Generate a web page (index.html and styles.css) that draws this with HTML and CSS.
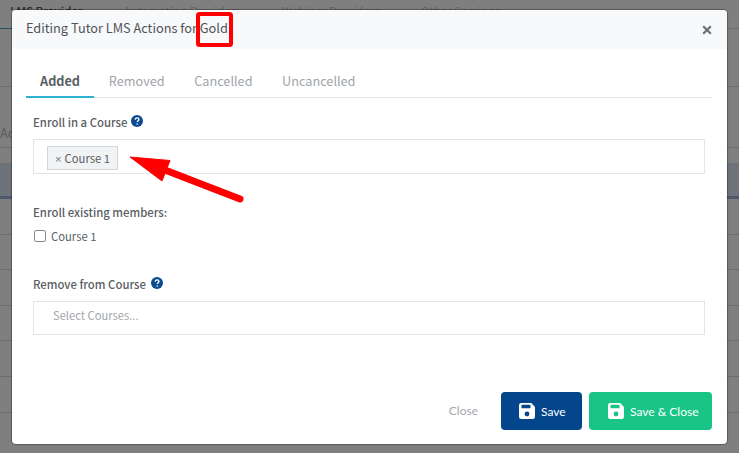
FILE: index.html
```html
<!DOCTYPE html>
<html lang="en">
<head>
<meta charset="utf-8">
<title>Editing Tutor LMS Actions for Gold</title>
<link rel="stylesheet" href="styles.css">
</head>
<body>
<div class="page">
  <nav class="page-nav">
    <span class="page-tab page-tab-first">LMS Provider</span>
    <span class="page-tab">Automation Providers</span>
    <span class="page-tab">Webinar Providers</span>
    <span class="page-tab">Other Sessions</span>
  </nav>
  <div class="page-rows">
    <div class="page-row page-row-a"></div>
    <div class="page-row page-row-b"><div class="page-row-text">Act</div></div>
    <div class="page-row-gap"></div>
    <div class="page-row-head"></div>
    <div class="page-row"></div>
    <div class="page-row"></div>
    <div class="page-row"></div>
    <div class="page-row"></div>
    <div class="page-row"></div>
    <div class="page-row"></div>
  </div>
</div>
<div class="overlay"></div>
<section class="modal">
  <header class="modal-head">
    <h1 class="modal-title">Editing Tutor LMS Actions for Gold</h1>
    <svg class="modal-x" viewBox="0 0 10 10" aria-label="Close"><path d="M1.2 1.2l7.6 7.6M8.8 1.2L1.2 8.8"/></svg>
  </header>
  <div class="modal-body">
    <div class="tabs">
      <span class="tab tab-active">Added</span>
      <span class="tab">Removed</span>
      <span class="tab">Cancelled</span>
      <span class="tab">Uncancelled</span>
    </div>
    <div class="form">
      <div class="label-row label-row-first">
        <label class="label">Enroll in a Course</label>
        <svg class="help" viewBox="0 0 12 12"><circle cx="6" cy="6" r="6"/><path d="M4.2 4.6c.1-1.1.9-1.7 1.9-1.7 1.1 0 1.8.7 1.8 1.5 0 1.3-1.6 1.3-1.6 2.6" /><circle class="dot" cx="6.2" cy="9" r=".8"/></svg>
      </div>
      <div class="select select-tags">
        <span class="tag"><span class="tag-x">×</span>Course 1</span>
      </div>
      <div class="label existing">Enroll existing members:</div>
      <label class="check-row"><span class="check"></span>Course 1</label>
      <div class="label-row label-row-remove">
        <label class="label">Remove from Course</label>
        <svg class="help" viewBox="0 0 12 12"><circle cx="6" cy="6" r="6"/><path d="M4.2 4.6c.1-1.1.9-1.7 1.9-1.7 1.1 0 1.8.7 1.8 1.5 0 1.3-1.6 1.3-1.6 2.6" /><circle class="dot" cx="6.2" cy="9" r=".8"/></svg>
      </div>
      <div class="select select-empty">Select Courses...</div>
    </div>
  </div>
  <footer class="modal-foot">
    <span class="close-link">Close</span>
    <button class="btn btn-save">
      <svg class="disk" viewBox="0 0 16 16"><path fill-rule="evenodd" d="M2.2 0h10l3.2 3.2a2 2 0 0 1 .6 1.4v9.2a2.2 2.2 0 0 1-2.2 2.2H2.2A2.2 2.2 0 0 1 0 13.800V2.200A2.200 2.200 0 0 1 2.200 0zM3 1.800a.5.5 0 0 0-.5.5v2.400a.5.500 0 0 0 .5.5h8a.5.500 0 0 0 .5-.5V2.300a.5.500 0 0 0-.5-.5zM8 8.600a2.400 2.400 0 1 0 0 4.800 2.400 2.400 0 0 0 0-4.800z"/></svg>Save
    </button>
    <button class="btn btn-close">
      <svg class="disk" viewBox="0 0 16 16"><path fill-rule="evenodd" d="M2.2 0h10l3.2 3.2a2 2 0 0 1 .6 1.4v9.2a2.2 2.2 0 0 1-2.2 2.2H2.2A2.2 2.2 0 0 1 0 13.800V2.200A2.200 2.200 0 0 1 2.200 0zM3 1.800a.5.5 0 0 0-.5.5v2.400a.5.500 0 0 0 .5.5h8a.5.500 0 0 0 .5-.5V2.300a.5.500 0 0 0-.5-.5zM8 8.600a2.400 2.400 0 1 0 0 4.800 2.400 2.400 0 0 0 0-4.800z"/></svg>Save &amp; Close
    </button>
  </footer>
</section>
<svg class="annotations" viewBox="0 0 739 453">
  <rect class="mark" x="198" y="14" width="33" height="31" rx="1.500"/>
  <path class="arrow-shaft" d="M165 170L240 199"/>
  <path class="arrow-head" d="M130 157L170 160.500L162 181Z"/>
</svg>
</body>
</html>
```
FILE: styles.css
```css
* { box-sizing: border-box; }
html, body { margin: 0; height: 100%; }
body {
  width: 739px;
  height: 453px;
  overflow: hidden;
  position: relative;
  background: #808080;
  font-family: "Noto Sans CJK SC", "Noto Sans", sans-serif;
  color: #4b4f56;
}
.page { height: 100%; display: flex; flex-direction: column; background: #fff; }
.page-nav { flex: none; display: flex; gap: 41px; padding: 1px 0 0 10px; height: 29px; font-size: 11.500px; font-weight: 400; color: #ccc; white-space: nowrap; border-bottom: 1px solid #d8d8d8; position: relative; }
.page-nav::before { content: ""; position: absolute; left: 0; bottom: -1px; width: 12px; height: 1px; background: #3fa7bd; }
.page-tab { height: 9px; line-height: 20px; overflow: hidden; }
.page-tab-first { color: #555; font-weight: 500; }
.page-rows { flex: 1; display: flex; flex-direction: column; }
.page-row { flex: none; border-bottom: 1px solid #d8d8d8; height: 35.600px; }
.page-row-a { height: 58px; }
.page-row-b { height: 61px; padding-top: 37px; }
.page-row-text { width: 12px; overflow: hidden; font-size: 12.700px; line-height: 18px; color: #b8b8b8; white-space: nowrap; }
.page-row-gap { flex: none; height: 15px; }
.page-row-head { flex: none; height: 36px; background: #dde6f5; border-bottom: 3px solid #98b2d8; }
.overlay { position: absolute; inset: 0; background: rgba(0, 0, 0, .5); }
.modal {
  position: absolute;
  left: 12px;
  top: 10px;
  width: 715px;
  height: 434px;
  background: #fff;
  border-radius: 4px;
  display: flex;
  flex-direction: column;
  box-shadow: 0 0 1px 1px rgba(0, 0, 0, .3);
}
.modal-head {
  height: 39px;
  flex: none;
  background: #f8f9fa;
  border-radius: 4px 4px 0 0;
  display: flex;
  align-items: center;
  justify-content: space-between;
  padding: 0 15px 4px 14px;
}
.modal-title { margin: 0; font-size: 12.750px; font-weight: 400; color: #4f5359; line-height: 20px; }
.modal-x { width: 10px; height: 10px; fill: none; stroke: #6c7178; stroke-width: 2.200; margin-top: 5px; }
.modal-body { flex: 1; padding: 0 15px 0 14px; }
.tabs { display: flex; height: 49px; align-items: flex-end; border-bottom: 1px solid #e3e6e8; }
.tab { padding: 0 14.800px 6px; font-size: 12.700px; line-height: 20px; color: #a0a4a9; font-weight: 400; }
.tab-active { color: #5a5f66; font-weight: 700; padding: 0 14px 5px; border-bottom: 2px solid #2eb0d0; margin-bottom: -1px; }
.form { padding: 0 7px; }
.label-row { display: flex; align-items: center; gap: 4px; }
.label-row-first { margin-top: 15px; }
.label-row-remove { margin-top: 31px; gap: 5px; }
.label { font-size: 11.350px; line-height: 18px; font-weight: 500; color: #5a5e64; }
.help { width: 12px; height: 12px; margin-top: -2px; }
.help circle { fill: #0b4a8f; }
.help path { fill: none; stroke: #fff; stroke-width: 1.400; }
.help .dot { fill: #fff; }
.select { border: 1px solid #e3e6e8; margin-top: 8px; }
.select-tags { height: 35px; padding: 4px 13px; }
.tag { display: inline-block; height: 24px; line-height: 22px; padding: 0 7px; font-size: 11.250px; color: #5a5e64; background: #f1f3f4; border: 1px solid #d3d6d9; }
.tag-x { font-family: "Liberation Sans", sans-serif; color: #777; margin-right: 3px; }
.existing { margin-top: 29px; }
.check-row { display: flex; align-items: center; gap: 5px; font-size: 11.250px; color: #5a5e64; margin-top: 7px; line-height: 16px; padding-left: 1px; }
.check { width: 12px; height: 12px; border: 1px solid #8a8d91; border-radius: 2px; background: #fff; }
.select-empty { height: 34px; line-height: 27px; padding-left: 19px; font-size: 11.200px; color: #a3a6aa; }
.modal-foot { flex: none; height: 52px; padding: 0 15px 14px 0; display: flex; align-items: stretch; justify-content: flex-end; }
.close-link { font-family: Lato, sans-serif; font-size: 12px; color: #a5a8ac; align-self: center; margin-right: 23px; margin-bottom: 1px; }
.btn { display: flex; align-items: center; gap: 6px; border: 0; border-radius: 4px; color: #fff; font-family: Lato, sans-serif; font-size: 12px; height: 38px; padding: 0 0 0 18px; }
.btn-save { width: 81px; background: #03468c; margin-right: 7px; }
.btn-close { width: 123px; background: #18c587; padding-left: 19px; }
.disk { width: 16px; height: 16px; fill: #fff; flex: none; }
.annotations { position: absolute; left: 0; top: 0; width: 739px; height: 453px; pointer-events: none; }
.mark { fill: none; stroke: #f00; stroke-width: 4; }
.arrow-shaft { stroke: #f00; stroke-width: 7; stroke-linecap: round; fill: none; }
.arrow-head { fill: #f00; stroke: #f00; stroke-width: 1; stroke-linejoin: round; }
```
